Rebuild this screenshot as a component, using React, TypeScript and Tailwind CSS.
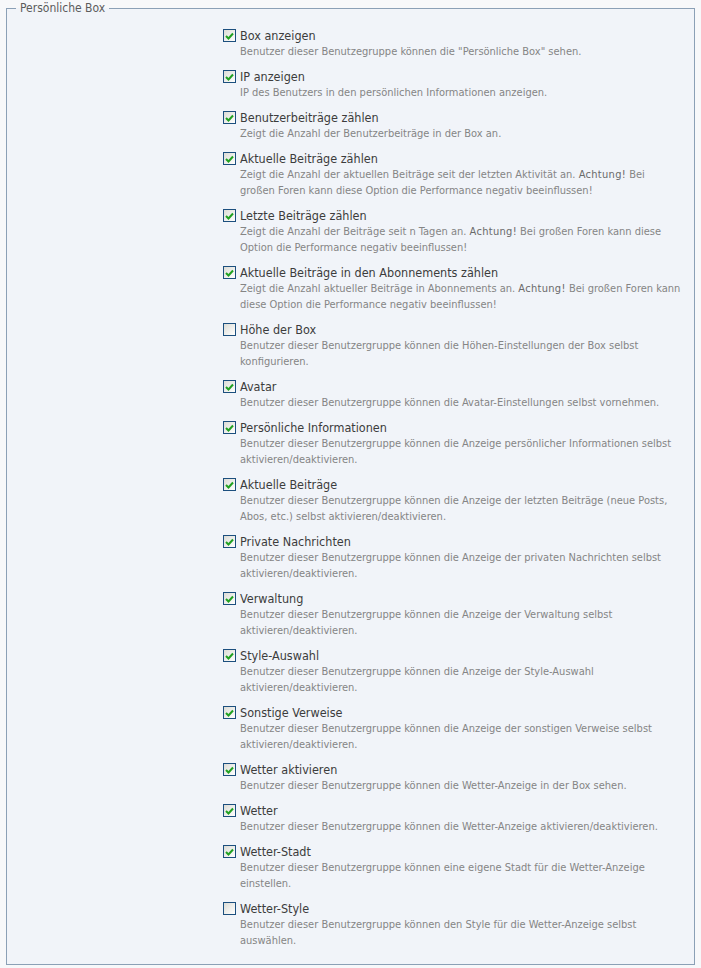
import React from 'react';

type Option = {
  label: string;
  checked: boolean;
  desc: React.ReactNode;
};

const Warn = () => <strong className="font-normal tracking-[0.3px] text-[#6a6a6a]">Achtung!</strong>;

const options: Option[] = [
  { label: 'Box anzeigen', checked: true, desc: 'Benutzer dieser Benutzegruppe können die "Persönliche Box" sehen.' },
  { label: 'IP anzeigen', checked: true, desc: 'IP des Benutzers in den persönlichen Informationen anzeigen.' },
  { label: 'Benutzerbeiträge zählen', checked: true, desc: 'Zeigt die Anzahl der Benutzerbeiträge in der Box an.' },
  {
    label: 'Aktuelle Beiträge zählen',
    checked: true,
    desc: (
      <>
        Zeigt die Anzahl der aktuellen Beiträge seit der letzten Aktivität an. <Warn /> Bei großen Foren kann diese Option
        die Performance negativ beeinflussen!
      </>
    ),
  },
  {
    label: 'Letzte Beiträge zählen',
    checked: true,
    desc: (
      <>
        Zeigt die Anzahl der Beiträge seit n Tagen an. <Warn /> Bei großen Foren kann diese Option die Performance negativ
        beeinflussen!
      </>
    ),
  },
  {
    label: 'Aktuelle Beiträge in den Abonnements zählen',
    checked: true,
    desc: (
      <>
        Zeigt die Anzahl aktueller Beiträge in Abonnements an. <Warn /> Bei großen Foren kann diese Option die Performance
        negativ beeinflussen!
      </>
    ),
  },
  { label: 'Höhe der Box', checked: false, desc: 'Benutzer dieser Benutzergruppe können die Höhen-Einstellungen der Box selbst konfigurieren.' },
  { label: 'Avatar', checked: true, desc: 'Benutzer dieser Benutzergruppe können die Avatar-Einstellungen selbst vornehmen.' },
  { label: 'Persönliche Informationen', checked: true, desc: 'Benutzer dieser Benutzergruppe können die Anzeige persönlicher Informationen selbst aktivieren/deaktivieren.' },
  { label: 'Aktuelle Beiträge', checked: true, desc: 'Benutzer dieser Benutzergruppe können die Anzeige der letzten Beiträge (neue Posts, Abos, etc.) selbst aktivieren/deaktivieren.' },
  { label: 'Private Nachrichten', checked: true, desc: 'Benutzer dieser Benutzergruppe können die Anzeige der privaten Nachrichten selbst aktivieren/deaktivieren.' },
  { label: 'Verwaltung', checked: true, desc: 'Benutzer dieser Benutzergruppe können die Anzeige der Verwaltung selbst aktivieren/deaktivieren.' },
  { label: 'Style-Auswahl', checked: true, desc: 'Benutzer dieser Benutzergruppe können die Anzeige der Style-Auswahl aktivieren/deaktivieren.' },
  { label: 'Sonstige Verweise', checked: true, desc: 'Benutzer dieser Benutzergruppe können die Anzeige der sonstigen Verweise selbst aktivieren/deaktivieren.' },
  { label: 'Wetter aktivieren', checked: true, desc: 'Benutzer dieser Benutzergruppe können die Wetter-Anzeige in der Box sehen.' },
  { label: 'Wetter', checked: true, desc: 'Benutzer dieser Benutzergruppe können die Wetter-Anzeige aktivieren/deaktivieren.' },
  { label: 'Wetter-Stadt', checked: true, desc: 'Benutzer dieser Benutzergruppe können eine eigene Stadt für die Wetter-Anzeige einstellen.' },
  { label: 'Wetter-Style', checked: false, desc: 'Benutzer dieser Benutzergruppe können den Style für die Wetter-Anzeige selbst auswählen.' },
];

const Checkbox = ({ checked }: { checked: boolean }) => (
  <span className="flex h-[13px] w-[13px] shrink-0 items-center justify-center border border-[#1c4f7e] bg-gradient-to-br from-[#dcdcd6] to-white">
    {checked && (
      <svg width="9" height="8" viewBox="0 0 9 8">
        <path d="M1 4 L3.5 6.5 L8 1.5" fill="none" stroke="#21a121" strokeWidth="2" />
      </svg>
    )}
  </span>
);

export default function App() {
  return (
    <div className="min-h-screen bg-[#f7f8fa] px-[6px] pb-[2px] font-['DejaVu_Sans_Condensed',sans-serif]">
      <fieldset className="m-0 min-w-0 border border-[#8ba0b6] bg-[#f1f4f9] px-0 pt-[10px] pb-[15px]">
        <legend className="ml-[9px] px-[4px] text-[12px] leading-[17px] text-[#5c5c5c]">Persönliche Box</legend>
        <div className="ml-[216px] mr-[13px] flex flex-col gap-[8px]">
          {options.map((o) => (
            <div key={o.label}>
              <label className="flex items-center gap-[4px] text-[12.5px] leading-[17px] text-[#3c3c3c]">
                <Checkbox checked={o.checked} />
                <span>{o.label}</span>
              </label>
              <p className="pl-[17px] text-[11px] leading-[16px] text-[#858585]">{o.desc}</p>
            </div>
          ))}
        </div>
      </fieldset>
    </div>
  );
}
